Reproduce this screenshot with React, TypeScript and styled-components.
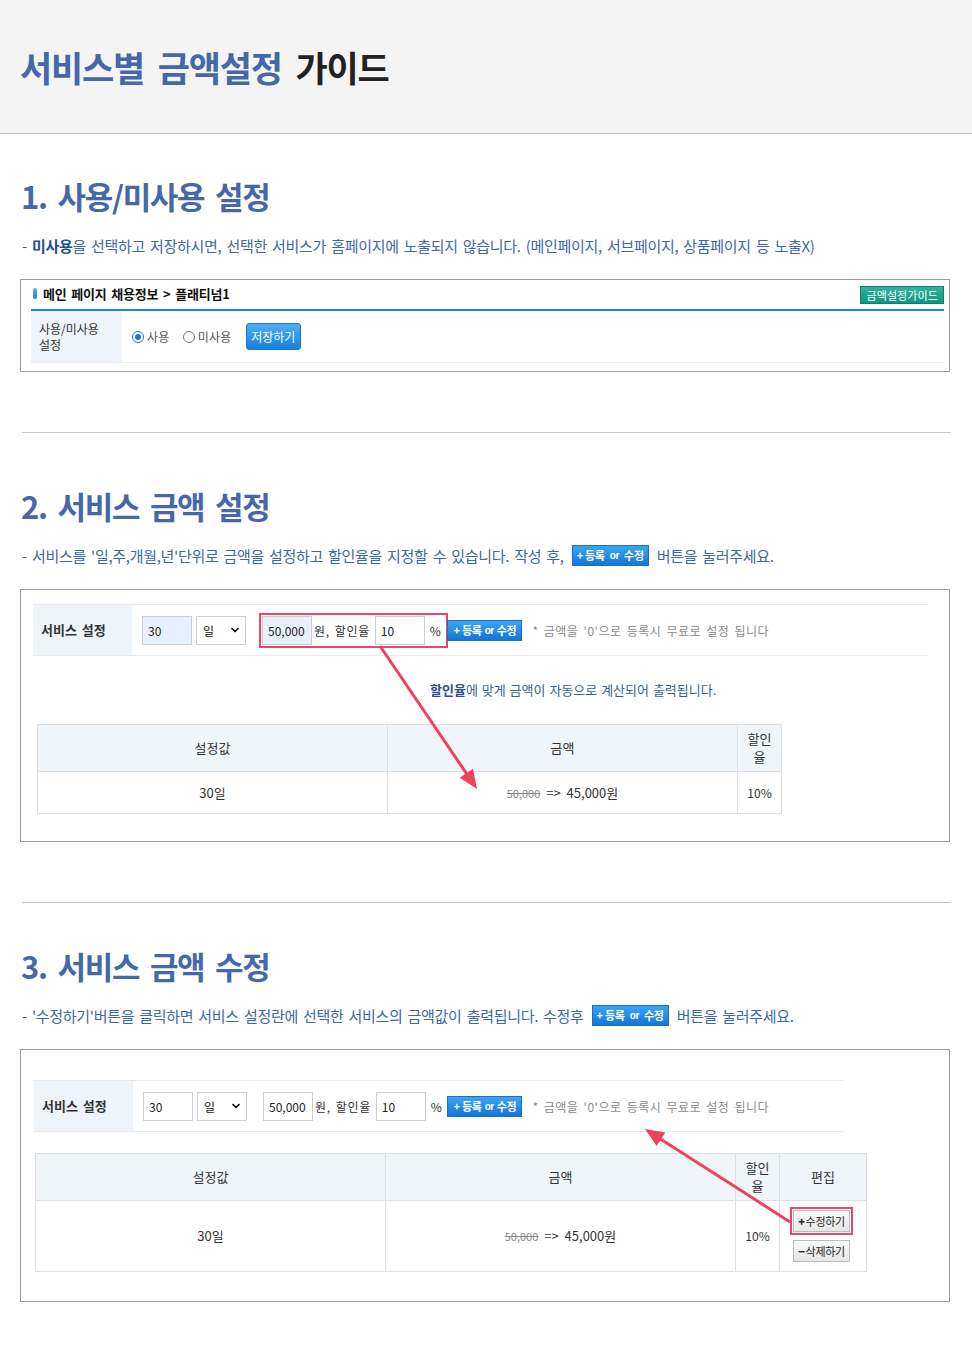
import styled, { createGlobalStyle } from 'styled-components';
import { ChevronDown } from 'lucide-react';

const GlobalStyle = createGlobalStyle`
    body {
        margin: 0;
        background: #fff;
        font-family: "Noto Sans CJK KR", "Noto Sans", sans-serif;
        color: #333;
    }
    * { box-sizing: border-box; }
`;

const Page = styled.div`
    width: 972px;
    padding-bottom: 48px;
`;

const Header = styled.header`
    height: 134px;
    display: flex;
    align-items: center;
    padding-left: 20px;
    background: #f4f4f4;
    border-bottom: 1px solid #bdbdbd;
`;

const PageTitle = styled.h1`
    margin: 0;
    font-size: 35px;
    font-weight: 700;
    letter-spacing: -1.2px;
    word-spacing: 7px;
    color: #4667a9;
    span { color: #222; }
`;

const Section = styled.section`
    padding-left: 20px;
`;

const Heading = styled.h2<{ $top: number }>`
    margin: ${p => p.$top}px 0 0 1px;
    height: 40px;
    line-height: 40px;
    font-size: 31px;
    font-weight: 700;
    letter-spacing: -1.3px;
    word-spacing: 5px;
    color: #4667a9;
`;

const Desc = styled.p`
    margin: 18px 0 0 2px;
    height: 22px;
    display: flex;
    align-items: center;
    font-size: 15px;
    letter-spacing: -0.3px;
    word-spacing: 2px;
    color: #3d68a6;
    white-space: pre;
    b { color: #23508f; font-weight: 700; }
`;

const Box = styled.div<{ $pad: string }>`
    position: relative;
    margin-top: 23px;
    width: 930px;
    border: 1px solid #9c9c9c;
    padding: ${p => p.$pad};
`;

const Rule = styled.div`
    margin: 60px 0 0 22px;
    width: 929px;
    height: 1px;
    background: #c9c9c9;
`;

/* box 1 */
const TitleBar = styled.div`
    height: 31px;
    display: flex;
    align-items: center;
    justify-content: space-between;
    border-bottom: 2px solid #1a86e0;
`;

const TitleText = styled.div`
    display: flex;
    align-items: center;
    gap: 6px;
    padding-left: 2px;
    margin-top: -2px;
    font-size: 13px;
    font-weight: 700;
    color: #111;
    letter-spacing: -0.2px;
    word-spacing: 2px;
`;

const Pill = styled.span`
    width: 4px;
    height: 11px;
    border-radius: 2px;
    background: linear-gradient(#5fb0f5, #1c7fe0);
`;

const GuideButton = styled.span`
    height: 18px;
    padding: 0 5px;
    display: inline-flex;
    align-items: center;
    font-size: 11px;
    color: #fff;
    background: linear-gradient(#2fb59d, #139481);
    border: 1px solid #0f7d6b;
    letter-spacing: 0.1px;
`;

const UseRow = styled.div`
    height: 52px;
    display: flex;
    border-bottom: 1px solid #e7edf3;
`;

const LabelCell = styled.div<{ $w: number; $bold?: boolean }>`
    width: ${p => p.$w}px;
    flex: none;
    display: flex;
    align-items: center;
    padding-left: 8px;
    background: #eef4fa;
    font-size: ${p => (p.$bold ? 13 : 12)}px;
    font-weight: ${p => (p.$bold ? 700 : 400)};
    line-height: 16px;
    word-spacing: 2px;
    color: #333;
`;

const FieldCell = styled.div<{ $pl: number }>`
    flex: 1;
    display: flex;
    align-items: center;
    padding-left: ${p => p.$pl}px;
    font-size: 12px;
    color: #555;
`;

const RadioLabel = styled.label<{ $gap: number }>`
    display: inline-flex;
    align-items: center;
    gap: 3px;
    margin-right: ${p => p.$gap}px;
    letter-spacing: 0.3px;
`;

const Radio = styled.span<{ $checked?: boolean }>`
    width: 12px;
    height: 12px;
    border-radius: 50%;
    border: 1px solid ${p => (p.$checked ? '#1a73e8' : '#767676')};
    background: #fff;
    display: inline-flex;
    align-items: center;
    justify-content: center;
    &::after {
        content: '';
        width: 6px;
        height: 6px;
        border-radius: 50%;
        background: ${p => (p.$checked ? '#1a73e8' : 'transparent')};
    }
`;

const SaveButton = styled.span`
    width: 55px;
    height: 27px;
    display: inline-flex;
    align-items: center;
    justify-content: center;
    font-size: 12px;
    color: #fff;
    background: linear-gradient(#4cb0f6, #1a7fdb);
    border: 1px solid #1b76cc;
    border-radius: 3px;
`;

/* boxes 2 and 3 */
const ServiceRow = styled.div<{ $w: number }>`
    width: ${p => p.$w}px;
    height: 52px;
    display: flex;
    border-top: 1px solid #e5ebf1;
    border-bottom: 1px solid #e5ebf1;
`;

const TextInput = styled.span<{ $filled?: boolean }>`
    width: 50px;
    height: 29px;
    display: inline-flex;
    align-items: center;
    padding-left: 5px;
    border: 1px solid #cfcfcf;
    background: ${p => (p.$filled ? '#e8f0fd' : '#fff')};
    font-size: 12px;
    color: #222;
`;

const SelectBox = styled.span`
    width: 50px;
    height: 29px;
    margin-left: 4px;
    display: inline-flex;
    align-items: center;
    justify-content: space-between;
    padding: 0 4px 0 6px;
    border: 1px solid #cfcfcf;
    background: #fff;
    font-size: 12px;
    color: #222;
`;

const PriceGroup = styled.span<{ $mark?: boolean }>`
    margin-left: 16px;
    display: inline-flex;
    align-items: center;
    padding-right: ${p => (p.$mark ? 4 : 0)}px;
    outline: ${p => (p.$mark ? '2px solid #ee4466' : 'none')};
    outline-offset: 1px;
`;

const Unit = styled.span<{ $m: string }>`
    margin: ${p => p.$m};
    font-size: 12px;
    color: #333;
    letter-spacing: 0.6px;
    word-spacing: 2px;
    white-space: pre;
`;

const BlueButton = styled.span<{ $w: number; $m: string }>`
    width: ${p => p.$w}px;
    height: 21px;
    margin: ${p => p.$m};
    display: inline-flex;
    align-items: center;
    justify-content: center;
    gap: 3px;
    font-size: 11px;
    font-weight: 700;
    color: #fff;
    letter-spacing: -0.3px;
    word-spacing: 0;
    background: linear-gradient(#3aa5f5, #1476d5);
    border: 1px solid #1b6fc4;
    vertical-align: middle;
    i {
        font-style: normal;
        font-family: "Liberation Sans", Arial, sans-serif;
        font-size: 10px;
        letter-spacing: -0.5px;
    }
`;

const Note = styled.span`
    margin-left: 10px;
    font-size: 12px;
    color: #8a8a8a;
    letter-spacing: 0.5px;
    word-spacing: 2px;
`;

const Hint = styled.p`
    margin: 24px 0 0;
    padding-left: 397px;
    height: 20px;
    line-height: 20px;
    font-size: 13px;
    letter-spacing: 0;
    word-spacing: 1px;
    color: #3b5f95;
    b { font-weight: 700; color: #2c4f86; }
`;

const Table = styled.table<{ $w: number; $ml: number; $mt: number }>`
    width: ${p => p.$w}px;
    margin: ${p => p.$mt}px 0 0 ${p => p.$ml}px;
    border-collapse: collapse;
    table-layout: fixed;
    font-size: 13px;
    color: #333;
    th, td {
        border: 1px solid #dcdfe3;
        text-align: center;
        padding: 0 4px;
        line-height: 18px;
    }
    th {
        height: 47px;
        font-weight: 400;
        background: #f0f5fa;
    }
`;

const Col = styled.col<{ $w: number }>`
    width: ${p => p.$w}px;
`;

const BodyCell = styled.td<{ $h: number }>`
    height: ${p => p.$h}px;
    word-spacing: 3px;
`;

const Old = styled.s`
    font-size: 11px;
    color: #888;
`;

const Small = styled.span`
    font-size: 12px;
`;

const EditStack = styled.div`
    display: flex;
    flex-direction: column;
    align-items: center;
    gap: 8px;
    margin-left: -3px;
`;

const EditButton = styled.span<{ $mark?: boolean }>`
    width: 57px;
    height: 22px;
    display: inline-flex;
    align-items: center;
    justify-content: center;
    font-size: 11px;
    color: #222;
    background: linear-gradient(#fafafa, #e6e6e6);
    border: 1px solid #bdbdbd;
    letter-spacing: -0.3px;
    word-spacing: 0;
    outline: ${p => (p.$mark ? '2px solid #ee4466' : 'none')};
    outline-offset: 1px;
    b { font-weight: 900; margin-right: 1px; }
`;

const Overlay = styled.svg`
    position: absolute;
    left: 0;
    top: 0;
    width: 100%;
    height: 100%;
    pointer-events: none;
    overflow: visible;
`;

function Arrow({ x1, y1, x2, y2 }: { x1: number; y1: number; x2: number; y2: number }) {
    const dx = x2 - x1;
    const dy = y2 - y1;
    const len = Math.hypot(dx, dy);
    const ux = dx / len;
    const uy = dy / len;
    const head = 19;
    const half = 8;
    const bx = x2 - ux * head;
    const by = y2 - uy * head;
    const pts = `${x2},${y2} ${bx - uy * half},${by + ux * half} ${bx + uy * half},${by - ux * half}`;
    return (
        <Overlay>
            <line x1={x1} y1={y1} x2={bx + ux * 2} y2={by + uy * 2} stroke="#f2415f" strokeWidth={3} />
            <polygon points={pts} fill="#f2415f" />
        </Overlay>
    );
}

function RegButton({ w, m }: { w: number; m: string }) {
    return (
        <BlueButton $w={w} $m={m}>
            + 등록 <i>or</i> 수정
        </BlueButton>
    );
}

function ServiceForm({ width, filled }: { width: number; filled?: boolean }) {
    return (
        <ServiceRow $w={width}>
            <LabelCell $w={99} $bold>서비스 설정</LabelCell>
            <FieldCell $pl={10}>
                <TextInput $filled={filled}>30</TextInput>
                <SelectBox>
                    일
                    <ChevronDown size={12} strokeWidth={3.5} color="#111" />
                </SelectBox>
                <PriceGroup $mark={filled}>
                    <TextInput $filled={filled}>50,000</TextInput>
                    <Unit $m="0 5px 0 2px">원, 할인율</Unit>
                    <TextInput>10</TextInput>
                    <Unit $m="0 0 0 5px">%</Unit>
                </PriceGroup>
                <RegButton w={75} m={filled ? '0 0 0 2px' : '0 0 0 5px'} />
                <Note>* 금액을 '0'으로 등록시 무료로 설정 됩니다</Note>
            </FieldCell>
        </ServiceRow>
    );
}

function PriceCell() {
    return (
        <>
            <Old>50,000</Old> =&gt; 45,000원
        </>
    );
}

export default function App() {
    return (
        <Page>
            <GlobalStyle />
            <Header>
                <PageTitle>
                    서비스별 금액설정 <span>가이드</span>
                </PageTitle>
            </Header>

            <Section>
                <Heading $top={42}>1. 사용/미사용 설정</Heading>
                <Desc>
                    {'- '}
                    <b>미사용</b>
                    {'을 선택하고 저장하시면, 선택한 서비스가 홈페이지에 노출되지 않습니다. (메인페이지, 서브페이지, 상품페이지 등 노출X)'}
                </Desc>
                <Box $pad="0 5px 8px 10px">
                    <TitleBar>
                        <TitleText>
                            <Pill />
                            메인 페이지 채용정보 &gt; 플래티넘1
                        </TitleText>
                        <GuideButton>금액설정가이드</GuideButton>
                    </TitleBar>
                    <UseRow>
                        <LabelCell $w={91}>
                            사용/미사용
                            <br />
                            설정
                        </LabelCell>
                        <FieldCell $pl={10}>
                            <RadioLabel $gap={13}>
                                <Radio $checked />
                                사용
                            </RadioLabel>
                            <RadioLabel $gap={14}>
                                <Radio />
                                미사용
                            </RadioLabel>
                            <SaveButton>저장하기</SaveButton>
                        </FieldCell>
                    </UseRow>
                </Box>
            </Section>

            <Rule />

            <Section>
                <Heading $top={53}>2. 서비스 금액 설정</Heading>
                <Desc>
                    {"- 서비스를 '일,주,개월,년'단위로 금액을 설정하고 할인율을 지정할 수 있습니다. 작성 후, "}
                    <RegButton w={77} m="0 3px" />
                    {' 버튼을 눌러주세요.'}
                </Desc>
                <Box $pad="14px 0 27px 12px">
                    <ServiceForm width={895} filled />
                    <Hint>
                        <b>할인율</b>에 맞게 금액이 자동으로 계산되어 출력됩니다.
                    </Hint>
                    <Table $w={744} $ml={4} $mt={24}>
                        <colgroup>
                            <Col $w={350} />
                            <Col $w={350} />
                            <Col $w={44} />
                        </colgroup>
                        <thead>
                            <tr>
                                <th>설정값</th>
                                <th>금액</th>
                                <th>할인율</th>
                            </tr>
                        </thead>
                        <tbody>
                            <tr>
                                <BodyCell $h={42}>30일</BodyCell>
                                <BodyCell $h={42}>
                                    <PriceCell />
                                </BodyCell>
                                <BodyCell $h={42}>
                                    <Small>10%</Small>
                                </BodyCell>
                            </tr>
                        </tbody>
                    </Table>
                    <Arrow x1={359} y1={56} x2={456} y2={199} />
                </Box>
            </Section>

            <Rule />

            <Section>
                <Heading $top={43}>3. 서비스 금액 수정</Heading>
                <Desc>
                    {"- '수정하기'버튼을 클릭하면 서비스 설정란에 선택한 서비스의 금액값이 출력됩니다. 수정후 "}
                    <RegButton w={77} m="0 3px" />
                    {' 버튼을 눌러주세요.'}
                </Desc>
                <Box $pad="30px 0 29px 13px">
                    <ServiceForm width={810} />
                    <Table $w={831} $ml={1} $mt={21}>
                        <colgroup>
                            <Col $w={350} />
                            <Col $w={350} />
                            <Col $w={44} />
                            <Col $w={87} />
                        </colgroup>
                        <thead>
                            <tr>
                                <th>설정값</th>
                                <th>금액</th>
                                <th>할인율</th>
                                <th>편집</th>
                            </tr>
                        </thead>
                        <tbody>
                            <tr>
                                <BodyCell $h={71}>30일</BodyCell>
                                <BodyCell $h={71}>
                                    <PriceCell />
                                </BodyCell>
                                <BodyCell $h={71}>
                                    <Small>10%</Small>
                                </BodyCell>
                                <BodyCell $h={71}>
                                    <EditStack>
                                        <EditButton $mark>
                                            <b>+</b>수정하기
                                        </EditButton>
                                        <EditButton>
                                            <b>−</b>삭제하기
                                        </EditButton>
                                    </EditStack>
                                </BodyCell>
                            </tr>
                        </tbody>
                    </Table>
                    <Arrow x1={769} y1={172} x2={624} y2={79} />
                </Box>
            </Section>
        </Page>
    );
}
